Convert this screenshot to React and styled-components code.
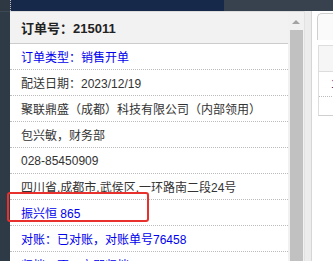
import styled, { createGlobalStyle } from "styled-components";

const GlobalStyle = createGlobalStyle`
  body {
    margin: 0;
    font-family: "Liberation Sans", "Noto Sans CJK SC", sans-serif;
  }
`;

const Page = styled.div`
  position: relative;
  width: 333px;
  height: 261px;
  overflow: hidden;
  display: flex;
  flex-direction: column;
  background: #fff;
`;

const TopBar = styled.div`
  display: flex;
  height: 11px;
  flex-shrink: 0;
`;

const TopSegment = styled.div`
  width: ${(p) => p.w || "auto"};
  flex: ${(p) => (p.w ? "none" : 1)};
  background: ${(p) => p.bg};
  border-right: ${(p) => (p.dotted ? "1px dotted #b8c0c8" : "none")};
`;

const Main = styled.div`
  flex: 1;
  display: flex;
  min-height: 0;
`;

const SideStrip = styled.div`
  width: 10px;
  flex-shrink: 0;
  background: #2e3a45;
  border-top: 1px solid #3c4853;
`;

const Popup = styled.div`
  width: 294px;
  flex-shrink: 0;
  display: flex;
  border-top: 1px solid #dcdcdc;
  background: #fff;
`;

const PopupBody = styled.div`
  flex: 1;
  display: flex;
  flex-direction: column;
  min-width: 0;
`;

const Header = styled.div`
  height: 31px;
  flex-shrink: 0;
  display: flex;
  align-items: center;
  padding-left: 11px;
  background: #f2f2f2;
  border-bottom: 1px solid #cccccc;
  font-size: 13px;
  font-weight: bold;
  color: #222;
`;

const Row = styled.div`
  height: 25px;
  flex-shrink: 0;
  display: flex;
  align-items: center;
  padding-left: 11px;
  border-bottom: 1px dotted #bbbbbb;
  font-size: 12px;
  white-space: nowrap;
  color: ${(p) => (p.link ? "#0000ee" : "#333333")};
`;

const ScrollTrack = styled.div`
  width: 16px;
  flex-shrink: 0;
  display: flex;
  flex-direction: column;
  align-items: center;
  background: #f1f1f1;
`;

const ArrowUp = styled.div`
  width: 0;
  height: 0;
  margin: 8px 0 6px;
  border-left: 4px solid transparent;
  border-right: 4px solid transparent;
  border-bottom: 4px solid #a3a3a3;
`;

const Thumb = styled.div`
  width: 13px;
  flex: 1;
  background: #c1c1c1;
`;

const Gutter = styled.div`
  width: 6px;
  flex-shrink: 0;
  background: #ececec;
  border-left: 1px solid #e2e2e2;
  border-right: 1px solid #d6d6d6;
`;

const RightPanel = styled.div`
  flex: 1;
  display: flex;
  flex-direction: column;
  padding: 2px 0 0 5px;
  background: #fff;
`;

const Tab = styled.div`
  height: 26px;
  border: 1px solid #cfcfcf;
  border-right: none;
  border-bottom: none;
  border-top-left-radius: 5px;
  background: #fafafa;
`;

const Table = styled.div`
  margin-top: 5px;
  margin-left: 1px;
  border-left: 1px solid #dddddd;
  border-top: 1px solid #dddddd;
  border-bottom: 1px solid #cfcfcf;
`;

const TableHead = styled.div`
  height: 25px;
  background: #f6f6f6;
  border-bottom: 1px solid #dddddd;
`;

const TableCell = styled.div`
  height: 24px;
  display: flex;
  align-items: center;
  padding-left: 12px;
  font-size: 12px;
  color: #4b2a7a;
  border-bottom: 1px dotted #bbbbbb;
`;

const TableFill = styled.div`
  height: 18px;
`;

const Highlight = styled.div`
  position: absolute;
  left: 7px;
  top: 192px;
  width: 138px;
  height: 26px;
  border: 2px solid #e8302c;
  border-radius: 3px;
  pointer-events: none;
`;

const rows = [
  { text: "订单类型：销售开单", link: true },
  { text: "配送日期：2023/12/19" },
  { text: "聚联鼎盛（成都）科技有限公司（内部领用）" },
  { text: "包兴敏，财务部" },
  { text: "028-85450909" },
  { text: "四川省,成都市,武侯区,一环路南二段24号" },
  { text: "振兴恒 865", link: true },
  { text: "对账：已对账，对账单号76458", link: true },
  { text: "归档：否，立即归档", link: true },
];

export default function App() {
  return (
    <>
      <GlobalStyle />
      <Page>
        <TopBar>
          <TopSegment w="10px" bg="#2d3843" dotted />
          <TopSegment w="213px" bg="#16294b" />
          <TopSegment bg="#37424e" />
        </TopBar>
        <Main>
          <SideStrip />
          <Popup>
            <PopupBody>
              <Header>订单号：215011</Header>
              {rows.map((r) => (
                <Row key={r.text} link={r.link}>
                  {r.text}
                </Row>
              ))}
            </PopupBody>
            <ScrollTrack>
              <ArrowUp />
              <Thumb />
            </ScrollTrack>
          </Popup>
          <Gutter />
          <RightPanel>
            <Tab />
            <Table>
              <TableHead />
              <TableCell>1</TableCell>
              <TableFill />
            </Table>
          </RightPanel>
        </Main>
        <Highlight />
      </Page>
    </>
  );
}
